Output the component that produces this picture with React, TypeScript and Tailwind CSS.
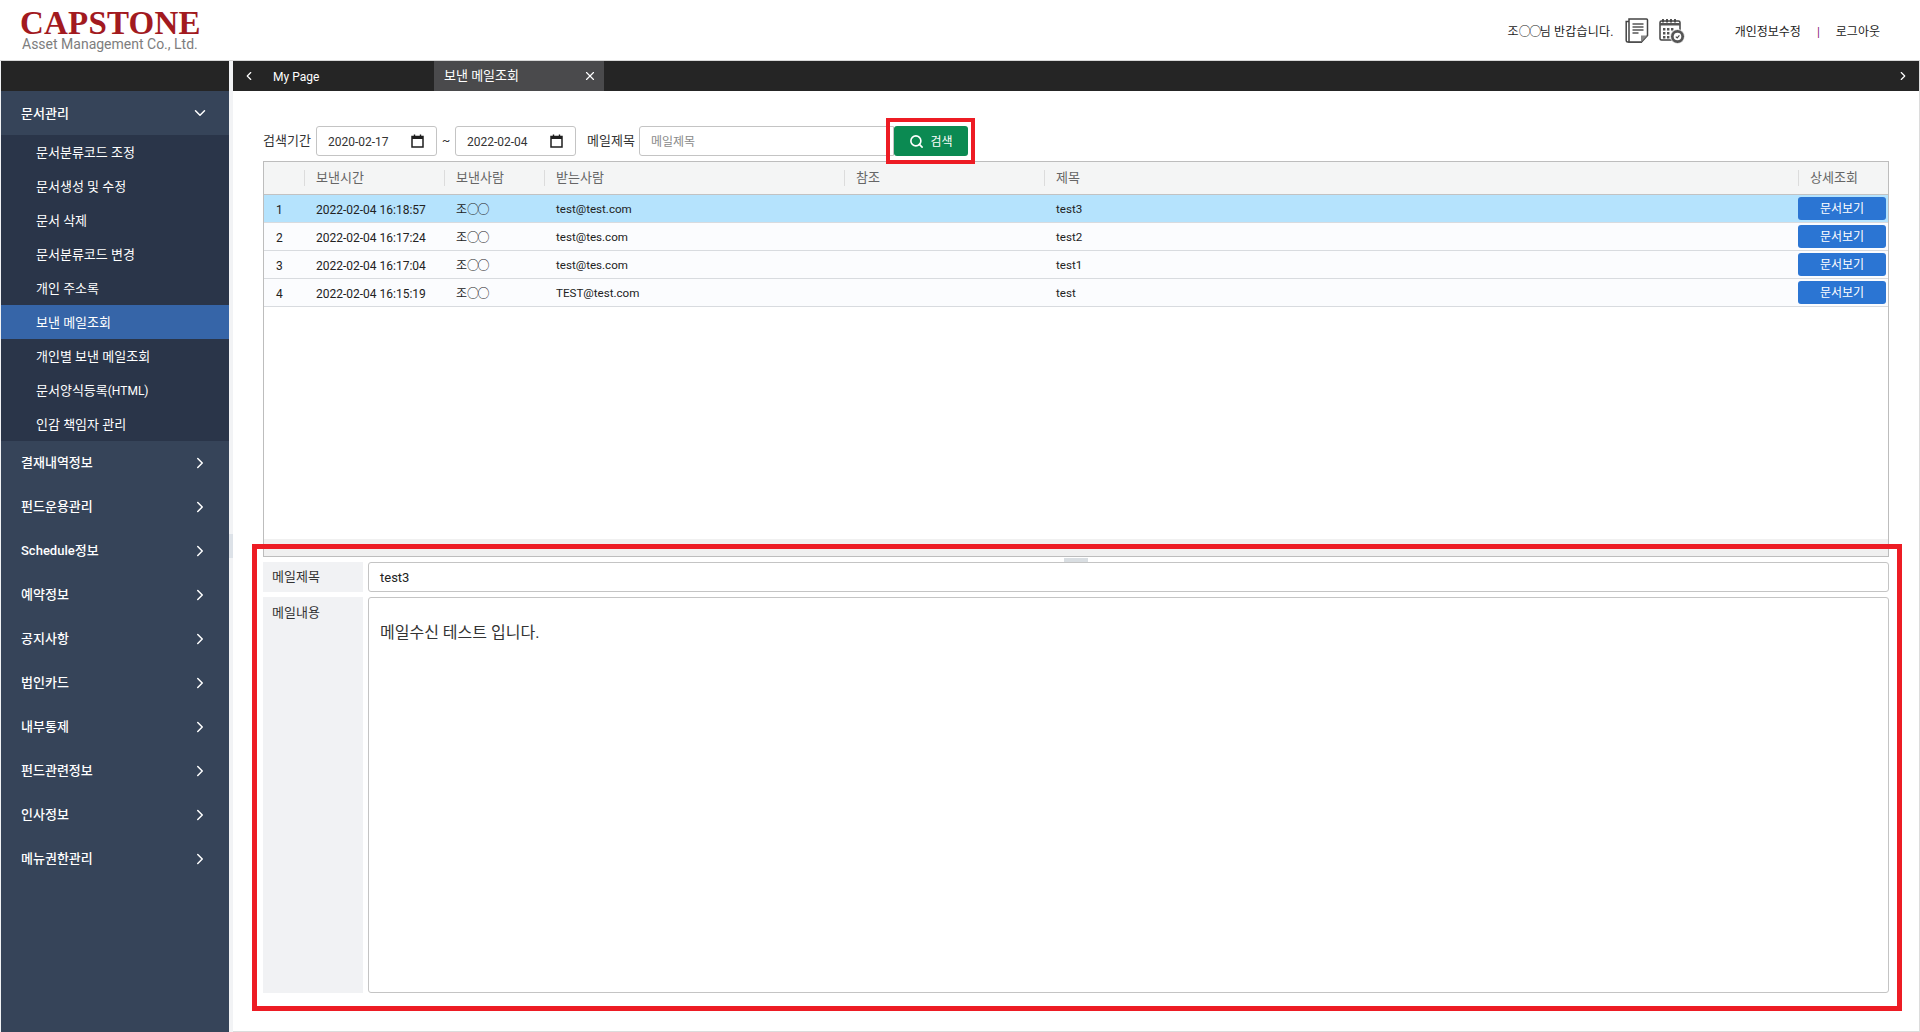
import { ChevronDown, ChevronLeft, ChevronRight, Search, X } from "lucide-react";

const FONT = "font-['Roboto','Noto_Sans_CJK_KR',sans-serif]";

const subMenus = [
  "문서분류코드 조정",
  "문서생성 및 수정",
  "문서 삭제",
  "문서분류코드 변경",
  "개인 주소록",
  "보낸 메일조회",
  "개인별 보낸 메일조회",
  "문서양식등록(HTML)",
  "인감 책임자 관리",
];

const groups = [
  "결재내역정보",
  "펀드운용관리",
  "Schedule정보",
  "예약정보",
  "공지사항",
  "법인카드",
  "내부통제",
  "펀드관련정보",
  "인사정보",
  "메뉴권한관리",
];

const rows = [
  { no: 1, time: "2022-02-04 16:18:57", to: "test@test.com", title: "test3" },
  { no: 2, time: "2022-02-04 16:17:24", to: "test@tes.com", title: "test2" },
  { no: 3, time: "2022-02-04 16:17:04", to: "test@tes.com", title: "test1" },
  { no: 4, time: "2022-02-04 16:15:19", to: "TEST@test.com", title: "test" },
];

const columns = [
  { label: "", width: "w-[40px]" },
  { label: "보낸시간", width: "w-[140px]" },
  { label: "보낸사람", width: "w-[100px]" },
  { label: "받는사람", width: "w-[300px]" },
  { label: "참조", width: "w-[200px]" },
  { label: "제목", width: "w-[754px]" },
  { label: "상세조회", width: "w-[90px]" },
];

function CalendarGlyph() {
  return (
    <svg width="13" height="14" viewBox="0 0 13 14" className="shrink-0">
      <path d="M1 2.5h11v10.5H1z" fill="none" stroke="#1f1f1f" strokeWidth="1.5" />
      <path d="M1 2h11v3H1z" fill="#1f1f1f" />
      <path d="M3.5 0.5v2M9.5 0.5v2" stroke="#1f1f1f" strokeWidth="1.4" />
    </svg>
  );
}

function DocIcon() {
  return (
    <svg width="24" height="26" viewBox="0 0 24 26" fill="none">
      <path d="M4 3.5H1.2v19a1.5 1.5 0 0 0 1.5 1.5H17" stroke="#444" strokeWidth="1.5" />
      <path d="M4 1h17.5a1 1 0 0 1 1 1v15.5l-6 6.5H4z" fill="#fff" stroke="#444" strokeWidth="1.5" />
      <path d="M16 24v-6.5h6.5z" fill="#888" />
      <path d="M7.5 6h11M7.5 9h11M7.5 12h11M7.5 15h6" stroke="#555" strokeWidth="1.6" />
    </svg>
  );
}

function ScheduleIcon() {
  return (
    <svg width="26" height="26" viewBox="0 0 26 26" fill="none">
      <rect x="1" y="3" width="20" height="19" rx="1.5" stroke="#444" strokeWidth="1.5" fill="#fff" />
      <path d="M1 5h20v2.5H1z" fill="#555" />
      <path d="M4 1v3.5M8 1v3.5M12 1v3.5M16 1v3.5" stroke="#444" strokeWidth="1.8" />
      <path d="M4 10h2.4v2.4H4zM8 10h2.4v2.4H8zM12 10h2.4v2.4H12zM4 14h2.4v2.4H4zM8 14h2.4v2.4H8zM4 18h2.4v2.4H4zM8 18h2.4v2.4H8z" fill="#555" />
      <circle cx="18.5" cy="18.5" r="7" fill="#555" stroke="#fff" strokeWidth="0.8" />
      <circle cx="18.5" cy="18.5" r="3.8" fill="#fff" />
      <path d="M16.8 18.6l1.4 1.3 2.2-2.6" stroke="#444" strokeWidth="1.1" />
    </svg>
  );
}

function Masked() {
  return (
    <>
      조<span className="tracking-[-1.5px]">○○</span>
    </>
  );
}

function Header() {
  return (
    <header className="flex h-[61px] shrink-0 items-center border-b border-[#d8d8d8] bg-white">
      <div className="ml-[20px] flex flex-col whitespace-nowrap">
        <div className="font-['Liberation_Serif',serif] text-[33px] font-bold leading-[27px] tracking-[0.2px] text-[#a21a1f]">
          CAPSTONE
        </div>
        <div className="ml-[2px] text-[14px] leading-[14px] text-[#7d7d7d]">
          Asset Management Co., Ltd.
        </div>
      </div>
      <div className="ml-auto flex items-center pt-[1px] text-[12px] text-[#222]">
        <span className="pt-[2px] tracking-[0.2px]">
          <Masked />님 반갑습니다.
        </span>
        <span className="ml-[11px]">
          <DocIcon />
        </span>
        <span className="ml-[10px]">
          <ScheduleIcon />
        </span>
        <span className="ml-[50px] pt-[2px]">개인정보수정</span>
        <span className="mx-[16px] pt-[2px] text-[#8a1a7a]">|</span>
        <span className="mr-[40px] pt-[2px]">로그아웃</span>
      </div>
    </header>
  );
}

function Sidebar() {
  return (
    <aside className="ml-px flex w-[228px] shrink-0 flex-col bg-[#2a3549] text-white">
      <div className="h-[30px] shrink-0 bg-[#252525]" />
      <div className="flex h-[44px] items-center justify-between bg-[#364459] pl-[20px] pr-[20px] text-[13px] font-medium">
        <span className="pt-[1px]">문서관리</span>
        <ChevronDown size={18} strokeWidth={2} />
      </div>
      <ul>
        {subMenus.map((m) => (
          <li
            key={m}
            className={`flex h-[34px] items-center pl-[35px] pt-[1px] text-[13px] ${
              m === "보낸 메일조회" ? "bg-[#3665a8]" : ""
            }`}
          >
            {m.endsWith("(HTML)") ? (
              <span>
                문서양식등록<span className="text-[12px]">(HTML)</span>
              </span>
            ) : (
              m
            )}
          </li>
        ))}
      </ul>
      <ul className="flex-1 bg-[#364459]">
        {groups.map((g) => (
          <li
            key={g}
            className="flex h-[44px] items-center justify-between pl-[20px] pr-[20px] text-[13px] font-medium"
          >
            <span>{g}</span>
            <ChevronRight size={18} strokeWidth={2} />
          </li>
        ))}
      </ul>
    </aside>
  );
}

function TabBar() {
  return (
    <div className="flex h-[30px] shrink-0 items-center bg-[#252525] text-white">
      <ChevronLeft size={14} className="ml-[9px]" />
      <span className="ml-[17px] w-[161px] pt-[1px] text-[12px]">My Page</span>
      <div className="flex h-full w-[170px] items-center justify-between bg-[#4a4a4c] pl-[10px] pr-[7px]">
        <span className="text-[13px]">보낸 메일조회</span>
        <X size={14} />
      </div>
      <ChevronRight size={14} className="ml-auto mr-[9px]" />
    </div>
  );
}

function DateInput({ value, width }: { value: string; width: string }) {
  return (
    <div
      className={`flex h-[30px] items-center justify-between rounded-[3px] border border-[#c4c4c4] pl-[11px] pr-[12px] text-[12px] text-[#333] ${width}`}
    >
      <span className="pt-[1px]">{value}</span>
      <CalendarGlyph />
    </div>
  );
}

function SearchRow() {
  return (
    <div className="flex h-[30px] items-center text-[13px] text-[#333]">
      <span className="w-[53px]">검색기간</span>
      <DateInput value="2020-02-17" width="w-[121px]" />
      <span className="w-[18px] text-center text-[12px]">~</span>
      <DateInput value="2022-02-04" width="w-[121px]" />
      <span className="ml-[11px] w-[52px]">메일제목</span>
      <div className="flex h-[30px] w-[255px] items-center rounded-l-[3px] border border-[#c4c4c4] pl-[11px] pt-[1px] text-[12px] text-[#8a8a8a]">
        메일제목
      </div>
      <button
        type="button"
        className="flex h-[30px] w-[74px] items-center justify-center gap-[6px] rounded-[3px] bg-[#0b8a52] pt-[1px] text-[12px] text-white"
      >
        <Search size={15} strokeWidth={2.6} />
        검색
      </button>
    </div>
  );
}

function MailTable() {
  return (
    <div className="flex h-[396px] flex-col border border-b-0 border-[#bdbdbd]">
      <table className="w-full table-fixed border-collapse text-[12px] text-[#222]">
        <thead>
          <tr className="h-[32px] border-b border-[#c2c2c2] bg-[#f4f5f5] text-[13px] text-[#666]">
            {columns.map((c, i) => (
              <th key={i} className={`p-0 text-left font-normal ${c.width}`}>
                {i > 0 && (
                  <div className="flex h-[16px] items-center border-l border-[#dcdcdc] pl-[11px]">
                    {c.label}
                  </div>
                )}
              </th>
            ))}
          </tr>
        </thead>
        <tbody>
          {rows.map((r) => (
            <tr
              key={r.no}
              className={`h-[28px] border-b border-[#d8dbdf] ${
                r.no === 1 ? "bg-[#b5e3fd]" : "bg-[#fbfcfe]"
              }`}
            >
              <td className="p-0 pl-[12px] pt-[4px]">{r.no}</td>
              <td className="p-0 pl-[12px] pt-[4px]">{r.time}</td>
              <td className="p-0 pl-[12px] pt-[4px]">
                <Masked />
              </td>
              <td className="p-0 pl-[12px] pt-[4px] text-[11.6px]">{r.to}</td>
              <td className="p-0" />
              <td className="p-0 pl-[12px] pt-[4px] text-[11.6px]">{r.title}</td>
              <td className="p-0 pt-[1px]">
                <button
                  type="button"
                  className="block h-[23px] w-[88px] rounded-[3px] bg-[#2b75d3] text-center text-[12px] text-white"
                >
                  문서보기
                </button>
              </td>
            </tr>
          ))}
        </tbody>
      </table>
      <div className="mt-auto h-[18px] border-b border-[#bdbdbd] bg-[#f0f0f0]" />
    </div>
  );
}

function DetailPanel() {
  return (
    <div className="mt-[5px] flex flex-col gap-[5px] text-[13px] text-[#333]">
      <div className="relative flex h-[30px] gap-[5px]">
        <div className="absolute left-[801px] top-[-4px] h-[4px] w-[24px] bg-[#d9dee2]" />
        <div className="flex w-[100px] items-center bg-[#f1f2f4] pl-[9px]">메일제목</div>
        <div className="flex flex-1 items-center rounded-[3px] border border-[#c4c4c4] pl-[11px] pt-[1px] text-[#222]">
          test3
        </div>
      </div>
      <div className="flex h-[396px] gap-[5px]">
        <div className="w-[100px] bg-[#f1f2f4] pl-[9px] pt-[6px]">메일내용</div>
        <div className="flex-1 rounded-[3px] border border-[#c4c4c4] pl-[11px] pt-[25px] text-[16px] leading-[20px]">
          메일수신 테스트 입니다.
        </div>
      </div>
    </div>
  );
}

export default function App() {
  return (
    <div className={`flex h-[1032px] w-[1920px] flex-col overflow-hidden bg-white ${FONT}`}>
      <Header />
      <div className="flex min-h-0 flex-1 bg-[#f2f3f5]">
        <Sidebar />
        <div className="relative w-[4px] shrink-0">
          <div className="absolute left-0 top-[473px] h-[24px] w-[4px] bg-[#dde2e8]" />
        </div>
        <main className="relative flex flex-1 flex-col border-b border-r border-[#dcdcdc] bg-white">
          <TabBar />
          <div className="pl-[30px] pr-[30px] pt-[35px]">
            <SearchRow />
            <div className="mt-[5px]">
              <MailTable />
            </div>
            <DetailPanel />
          </div>
          {/* annotation boxes drawn over the screenshot */}
          <div className="absolute left-[653px] top-[57px] h-[46px] w-[89px] border-4 border-[#ed1c24]" />
          <div className="absolute left-[19px] top-[483px] h-[467px] w-[1650px] border-[5px] border-[#ed1c24]" />
        </main>
      </div>
    </div>
  );
}
